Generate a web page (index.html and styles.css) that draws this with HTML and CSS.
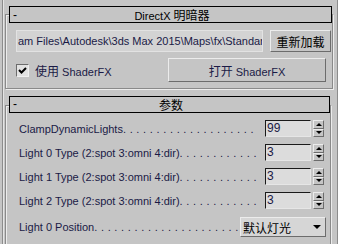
FILE: index.html
```html
<!DOCTYPE html>
<html lang="zh">
  <head>
    <meta charset="UTF-8" />
    <title>DirectX 明暗器</title>
    <link rel="stylesheet" href="styles.css">
  </head>
  <body>
    <div class="panel">
      <div class="rollout rollout-shader">
        <div class="rollout-title">
          <span class="toggle">-</span>
          <span>DirectX <span class="cjk">明暗器</span></span>
        </div>
        <div class="path-row">
          <div class="path-field">am Files\Autodesk\3ds Max 2015\Maps\fx\Standard</div>
          <button class="btn btn-reload"><span class="cjk">重新加载</span></button>
        </div>
        <div class="fx-row">
          <label class="check">
            <span class="box">
              <svg width="9" height="9" viewBox="0 0 9 9">
                <path d="M1 4 L3.5 6.5 L8 2" fill="none" stroke="#000" stroke-width="2" />
              </svg>
            </span>
            <span><span class="cjk">使用</span> ShaderFX</span>
          </label>
          <button class="btn btn-open"><span class="cjk">打开</span> ShaderFX</button>
        </div>
      </div>

      <div class="rollout rollout-params">
        <div class="rollout-title">
          <span class="toggle">-</span>
          <span class="cjk">参数</span>
        </div>
        <div class="param">
          <span class="label">ClampDynamicLights</span>
          <span class="leader">. . . . . . . . . . . . . . . . . . . .</span>
          <div class="spinner">
            <span class="spin-field">99</span>
            <span class="spin-btns"><span class="spin-up"></span><span class="spin-down"></span></span>
          </div>
        </div>
        <div class="param">
          <span class="label">Light 0 Type (2:spot 3:omni 4:dir)</span>
          <span class="leader">. . . . . . . . . . . .</span>
          <div class="spinner">
            <span class="spin-field">3</span>
            <span class="spin-btns"><span class="spin-up"></span><span class="spin-down"></span></span>
          </div>
        </div>
        <div class="param">
          <span class="label">Light 1 Type (2:spot 3:omni 4:dir)</span>
          <span class="leader">. . . . . . . . . . . .</span>
          <div class="spinner">
            <span class="spin-field">3</span>
            <span class="spin-btns"><span class="spin-up"></span><span class="spin-down"></span></span>
          </div>
        </div>
        <div class="param">
          <span class="label">Light 2 Type (2:spot 3:omni 4:dir)</span>
          <span class="leader">. . . . . . . . . . . .</span>
          <div class="spinner">
            <span class="spin-field">3</span>
            <span class="spin-btns"><span class="spin-up"></span><span class="spin-down"></span></span>
          </div>
        </div>
        <div class="param param-select">
          <span class="label">Light 0 Position</span>
          <span class="leader">. . . . . . . . . . . . . . . . . . . . . .</span>
          <div class="dropdown">
            <span class="cjk">默认灯光</span>
            <span class="arrow"></span>
          </div>
        </div>
      </div>
    </div>
  </body>
</html>
```

FILE: styles.css
```css
body {
  margin: 0;
  width: 338px;
  height: 244px;
  overflow: hidden;
  background: #c5c5c5;
  font-family: 'Liberation Sans', Arial, sans-serif;
  font-size: 11px;
  color: #1a1a46;
}
.cjk {
  font-family: 'Noto Sans CJK SC', sans-serif;
  font-size: 12px;
}

/* command panel frame */
.panel {
  margin-left: 2px;
  height: 244px;
  box-sizing: border-box;
  padding-top: 14px;
  overflow: hidden;
  border-left: 1px solid #8c8c8c;
  border-right: 1px solid #8c8c8c;
  box-shadow: inset 1px 0 0 #e4e4e4;
}
.rollout {
  margin: 0 4px 0 2px;
  border: 1px solid #8a8a8a;
  box-shadow: inset 1px 1px 0 #ececec, 1px 1px 0 #ececec;
}
.rollout-shader {
  padding-bottom: 6px;
}
.rollout-params {
  margin-top: 16px;
  margin-right: 6px;
  height: 150px;
}
.rollout-title {
  display: grid;
  grid-template-columns: 1fr auto 1fr;
  align-items: center;
  height: 17px;
  box-sizing: border-box;
  margin: -9px 0 7px 3px;
  padding-left: 3px;
  border: 1px solid #000;
  background: #c5c5c5;
  line-height: 15px;
  color: #000;
}
.rollout-params .rollout-title {
  margin-top: -10px;
}
.toggle {
  font-size: 12px;
  line-height: 15px;
}

/* buttons */
.btn {
  box-sizing: border-box;
  padding: 0;
  background: #c5c5c5;
  border: 1px solid;
  border-color: #ececec #6c6c6c #6c6c6c #ececec;
  font-family: inherit;
  font-size: 11px;
  color: #1a1a46;
}

/* shader rollout */
.path-row {
  display: flex;
  gap: 7px;
  height: 22px;
  margin-bottom: 6px;
  padding-left: 10px;
}
.path-field {
  width: 247px;
  box-sizing: border-box;
  padding-left: 1px;
  background: #d3d3d3;
  border: 1px solid #e2e2e2;
  line-height: 20px;
  white-space: nowrap;
  overflow: hidden;
}
.btn-reload {
  width: 61px;
  color: #000;
}
.fx-row {
  display: flex;
  align-items: center;
  height: 24px;
  padding-left: 10px;
}
.check {
  display: flex;
  align-items: center;
  gap: 6px;
  width: 152px;
}
.box {
  display: flex;
  align-items: center;
  justify-content: center;
  width: 13px;
  height: 13px;
  box-sizing: border-box;
  background: #e2e2e2;
  border: 1px solid;
  border-color: #6c6c6c #f0f0f0 #f0f0f0 #6c6c6c;
}
.btn-open {
  width: 158px;
  height: 24px;
}

/* parameters rollout */
.param {
  display: flex;
  align-items: center;
  height: 17px;
  margin-bottom: 7px;
  padding: 0 6px 0 13px;
}
.label,
.leader {
  white-space: nowrap;
}
.leader {
  letter-spacing: 0.3px;
}
.spinner {
  display: flex;
  gap: 2px;
  height: 17px;
  margin-left: auto;
}
.spin-field {
  width: 46px;
  box-sizing: border-box;
  padding-left: 1px;
  background: #dcdcdc;
  border: 1px solid;
  border-color: #1a1a1a #e6e6e6 #e6e6e6 #1a1a1a;
  line-height: 15px;
  font-size: 12px;
}
.spin-btns {
  display: flex;
  flex-direction: column;
  width: 11px;
}
.spin-up,
.spin-down {
  flex: 1;
  display: flex;
  align-items: center;
  justify-content: center;
  border: 1px solid;
  border-color: #ececec #6c6c6c #6c6c6c #ececec;
}
.spin-up::before {
  content: '';
  border: 3px solid transparent;
  border-top: 0;
  border-bottom: 3px solid #000;
}
.spin-down::before {
  content: '';
  border: 3px solid transparent;
  border-bottom: 0;
  border-top: 3px solid #000;
}
.param-select {
  height: 20px;
  margin-top: 8px;
  padding-right: 4px;
}
.dropdown {
  display: flex;
  align-items: center;
  justify-content: space-between;
  width: 86px;
  height: 20px;
  box-sizing: border-box;
  margin-left: auto;
  padding: 0 4px 0 2px;
  background: #d6d6d6;
  border: 1px solid;
  border-color: #ececec #6c6c6c #6c6c6c #ececec;
  color: #000;
}
.arrow {
  border: 4px solid transparent;
  border-bottom: 0;
  border-top: 4px solid #000;
}
```
